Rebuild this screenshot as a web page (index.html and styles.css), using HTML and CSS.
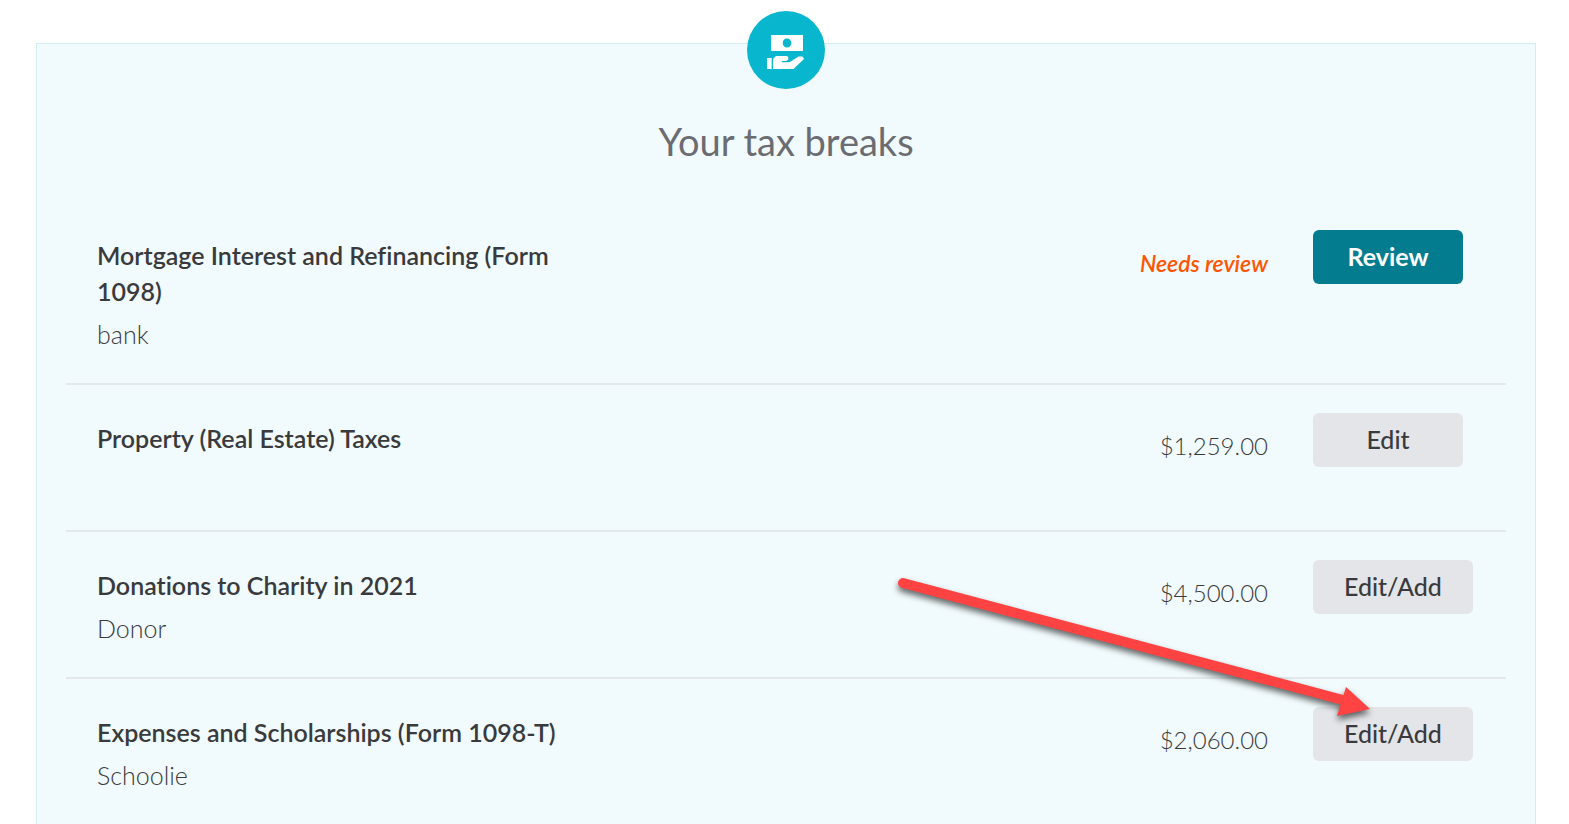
FILE: index.html
```html
<!DOCTYPE html>
<html lang="en">
<head>
  <meta charset="utf-8">
  <title>Your tax breaks</title>
  <link rel="stylesheet" href="styles.css">
</head>
<body>
  <main class="page">
    <section class="panel">
      <div class="panel-icon">
        <svg viewBox="0 0 78 78" width="78" height="78" aria-hidden="true">
          <path fill="#fff" fill-rule="evenodd" d="M24 24h32v16H24z M35.700 32a4.300 4.600 0 1 0 8.600 0a4.300 4.600 0 1 0 -8.600 0z"/>
          <path fill="#fff" d="M20 47h4.700v11H20z M26 58V48l3-3h11l1.300 1.300v2.200l-2 1.500h-4.500v1.200h7.700L51.500 45.500h4l1.500 2.500L46.500 58z"/>
        </svg>
      </div>
      <h1>Your tax breaks</h1>

      <ul class="breaks">
        <li class="row">
          <div class="info">
            <h2>Mortgage Interest and Refinancing (Form 1098)</h2>
            <p>bank</p>
          </div>
          <span class="status">Needs review</span>
          <div class="action"><button type="button" class="btn btn-primary">Review</button></div>
        </li>
        <li class="row">
          <div class="info">
            <h2>Property (Real Estate) Taxes</h2>
          </div>
          <span class="amount">$1,259.00</span>
          <div class="action"><button type="button" class="btn">Edit</button></div>
        </li>
        <li class="row">
          <div class="info">
            <h2>Donations to Charity in 2021</h2>
            <p>Donor</p>
          </div>
          <span class="amount">$4,500.00</span>
          <div class="action"><button type="button" class="btn">Edit/Add</button></div>
        </li>
        <li class="row">
          <div class="info">
            <h2>Expenses and Scholarships (Form 1098-T)</h2>
            <p>Schoolie</p>
          </div>
          <span class="amount">$2,060.00</span>
          <div class="action"><button type="button" class="btn">Edit/Add</button></div>
          <!-- arrow pointing at the button -->
          <svg class="arrow" viewBox="0 0 490 160" width="490" height="160" aria-hidden="true">
            <path d="M13 13L453 130" stroke="#ff4242" stroke-width="10" stroke-linecap="round"/>
            <path d="M456 117L480 139L447 146z" fill="#ff4242"/>
          </svg>
        </li>
      </ul>
    </section>
  </main>
</body>
</html>
```
FILE: styles.css
```css
body {
  margin: 0;
  background-color: #fff;
  color: #393a3d;
  font-family: Lato, "Open Sans", sans-serif;
  font-size: 25px;
  font-variant-ligatures: none;
  line-height: 36px;
}

.page {
  padding: 43px 33px 0 36px;
}

.panel {
  padding: 0 29px;
  border: 1px solid #d4eeef;
  border-bottom: 0;
  background-color: #f1fafc;
}

.panel-icon {
  width: 78px;
  height: 78px;
  margin: -33px auto 0;
  border-radius: 50%;
  background-color: #08b6ce;
}

.panel-icon svg {
  display: block;
}

h1 {
  margin: 25px 0 34px;
  color: #6b6c72;
  font-size: 38px;
  font-weight: 400;
  line-height: 54px;
  text-align: center;
}

.breaks {
  margin: 0;
  padding: 0;
  list-style: none;
}

.row {
  position: relative;
  display: flex;
  align-items: flex-start;
  box-sizing: border-box;
  min-height: 147px;
  padding: 28px 0 31px 31px;
  border-bottom: 2px solid #e3e9eb;
}

.row:last-child {
  min-height: 145px;
  border-bottom: 0;
}

.info {
  width: 34%;
  margin-right: auto;
  padding-top: 7px;
}

.info h2 {
  margin: 0;
  font-size: 25px;
  font-weight: 600;
}

.info p {
  margin: 7px 0 0;
  font-weight: 300;
}

.amount,
.status {
  padding-top: 15px;
}

.amount {
  font-size: 24px;
  font-weight: 300;
}

.status {
  color: #ff5500;
  font-size: 23px;
  font-style: italic;
  font-weight: 600;
}

.action {
  width: 193px;
  margin-left: 45px;
}

.btn {
  min-width: 150px;
  height: 54px;
  padding: 0 31px 2px;
  border: 0;
  border-radius: 6px;
  background-color: #e3e5e8;
  color: #393a3d;
  font-family: inherit;
  font-size: 25px;
  font-weight: 500;
  cursor: pointer;
}

.btn-primary {
  background-color: #037c8f;
  color: #fff;
  font-weight: 700;
}

.arrow {
  position: absolute;
  top: -109px;
  right: 126px;
  filter: drop-shadow(0 4px 3px rgba(0, 0, 0, 0.6));
  pointer-events: none;
}
```
